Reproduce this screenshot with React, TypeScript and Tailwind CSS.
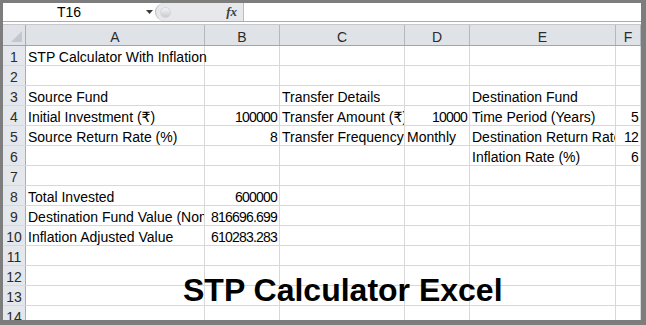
import React from 'react';

type CellDef = { v?: string; right?: boolean; spill?: boolean };

const cols = ['A', 'B', 'C', 'D', 'E', 'F'];
const widths = ['w-[179px]', 'w-[75px]', 'w-[125px]', 'w-[65px]', 'w-[146px]', 'w-[25px]'];

const rows: Record<number, (CellDef | null)[]> = {
  1: [{ v: 'STP Calculator With Inflation', spill: true }],
  3: [{ v: 'Source Fund' }, null, { v: 'Transfer Details' }, null, { v: 'Destination Fund' }],
  4: [
    { v: 'Initial Investment (₹)' },
    { v: '100000', right: true },
    { v: 'Transfer Amount (₹)' },
    { v: '10000', right: true },
    { v: 'Time Period (Years)' },
    { v: '5', right: true },
  ],
  5: [
    { v: 'Source Return Rate (%)' },
    { v: '8', right: true },
    { v: 'Transfer Frequency' },
    { v: 'Monthly' },
    { v: 'Destination Return Rate' },
    { v: '12', right: true },
  ],
  6: [null, null, null, null, { v: 'Inflation Rate (%)' }, { v: '6', right: true }],
  8: [{ v: 'Total Invested' }, { v: '600000', right: true }],
  9: [{ v: 'Destination Fund Value (Nominal)' }, { v: '816696.699', right: true }],
  10: [{ v: 'Inflation Adjusted Value' }, { v: '610283.283', right: true }],
};

const FormulaBar = () => (
  <div className="flex h-[18px] shrink-0 bg-white">
    <div className="w-[132px] flex items-center justify-center text-[14px] text-black">T16</div>
    <div className="w-[20px] flex items-center">
      <svg width="7" height="4" viewBox="0 0 7 4" className="ml-[11px]">
        <polygon points="0,0 7,0 3.5,4" fill="#3a3a3a" />
      </svg>
    </div>
    <div className="w-[88px] flex items-center bg-[#e6e8eb] rounded-l-[9px] border-l border-[#b9bcc0]">
      <div className="ml-[4px] w-[11px] h-[11px] rounded-full bg-gradient-to-b from-[#f4f4f4] to-[#c9cbce] border border-[#d3d5d8]" />
      <span className="ml-auto mr-[6px] font-['Liberation_Serif',serif] italic font-bold text-[13px] text-[#404040]">fx</span>
    </div>
    <div className="w-px bg-[#b9bcc0]" />
    <div className="flex-1 bg-white" />
  </div>
);

const Cell = ({ def, w }: { def: CellDef | null; w: string }) => (
  <div
    className={`${w} h-full shrink-0 border-r border-[#d8d8d8] flex items-end pb-px px-[2px] whitespace-nowrap ${
      def?.spill ? 'overflow-visible relative z-10' : 'overflow-hidden'
    } ${def?.right ? 'justify-end tracking-[-0.8px]' : 'justify-start'}`}
  >
    {def?.v}
  </div>
);

export default function App() {
  return (
    <div className="relative w-[646px] h-[325px] bg-[#7d7d7d] pt-[3px] pl-[3px] pr-[5px] pb-[5px] font-['Liberation_Sans','DejaVu_Sans',sans-serif] overflow-hidden">
      <div className="flex flex-col h-full bg-white overflow-hidden">
        <FormulaBar />
        <div className="h-px shrink-0 bg-[#a9abae]" />
        <div className="h-[2px] shrink-0 bg-white" />
        <div className="h-px shrink-0 bg-[#c6c8cb]" />

        <div className="flex h-[21px] shrink-0 bg-[#dfe3e8] border-b border-[#9fa5ad] text-[14px] leading-[14px] text-[#2b2b2b]">
          <div className="w-[23px] h-full shrink-0 border-r border-[#a9aeb4] flex items-end justify-end pr-[3px] pb-[3px]">
            <svg width="11" height="11" viewBox="0 0 11 11">
              <polygon points="11,0 11,11 0,11" fill="#c3c8ce" />
            </svg>
          </div>
          {cols.map((c, i) => (
            <div
              key={c}
              className={`${widths[i]} h-full shrink-0 border-r border-[#b3b8be] flex items-end justify-center pb-px`}
            >
              {c}
            </div>
          ))}
        </div>

        {Array.from({ length: 14 }, (_, r) => r + 1).map(r => {
          const data = rows[r] || [];
          return (
            <div key={r} className="flex h-[20px] shrink-0 border-b border-[#d8d8d8] text-[14px] leading-[14px] text-black">
              <div className="w-[23px] h-full shrink-0 bg-[#e4e7ec] border-r border-[#a9aeb4] flex items-end justify-center pb-px text-[#2b2b2b]">
                {r}
              </div>
              {cols.map((c, i) => (
                <Cell key={c} def={data[i] ?? null} w={widths[i]} />
              ))}
            </div>
          );
        })}
      </div>

      <div className="absolute left-[183px] top-[274px] text-[32px] leading-none font-bold text-black whitespace-nowrap">
        STP Calculator Excel
      </div>
    </div>
  );
}
